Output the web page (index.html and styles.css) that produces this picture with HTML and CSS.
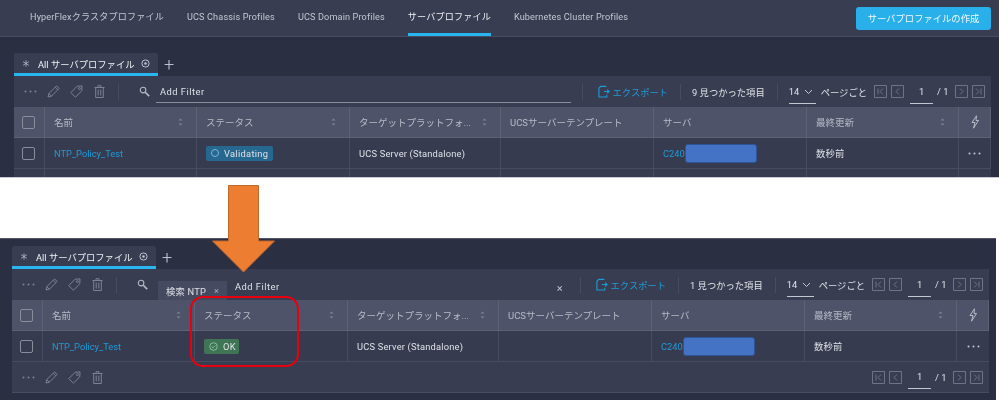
FILE: index.html
```html
<!DOCTYPE html>
<html>
<head>
  <title>サーバプロファイル</title>
  <link rel="stylesheet" href="styles.css">
</head>
<body>

<svg class="sprite" width="0" height="0">
  <symbol id="i-dots" viewBox="0 0 13 13"><circle cx="1.5" cy="6.5" r="1"/><circle cx="6.5" cy="6.5" r="1"/><circle cx="11.5" cy="6.5" r="1"/></symbol>
  <symbol id="i-pencil" viewBox="0 0 13 13"><path d="M1 12l.8-3.4L9.6.9l2.5 2.5-7.7 7.8zM1.8 8.6l2.6 2.6M8.3 2.2l2.5 2.5" fill="none" stroke="currentColor"/></symbol>
  <symbol id="i-tag" viewBox="0 0 13 13"><path d="M.8 7.6L7.2 1.2 12 .9l-.2 4.9-6.4 6.4zM9.3 2.6a1 1 0 1 0 1.1 1.1 1 1 0 0 0-1.1-1.1" fill="none" stroke="currentColor"/></symbol>
  <symbol id="i-trash" viewBox="0 0 13 13"><path d="M1.5 2.5h10M5 2.5V.7h3v1.8M2.7 2.5v10h7.6v-10M5.2 4.5v6M7.8 4.5v6" fill="none" stroke="currentColor"/></symbol>
  <symbol id="i-search" viewBox="0 0 13 13"><circle cx="4.8" cy="4.8" r="3.3" fill="none" stroke="currentColor" stroke-width="1.3"/><path d="M7.4 7.4l4.6 4.6" stroke="currentColor" stroke-width="2"/></symbol>
  <symbol id="i-export" viewBox="0 0 13 13"><path d="M9 1H3L1 3v9.500h8.500V10M6.500 6.500H12M10 4.500l2 2-2 2" fill="none" stroke="currentColor" stroke-width="1.200"/></symbol>
  <symbol id="i-first" viewBox="0 0 13 13"><path d="M.5.5h12v12H.5zM4 3.500v6M9 3.500L6 6.500l3 3" fill="none" stroke="currentColor"/></symbol>
  <symbol id="i-prev" viewBox="0 0 13 13"><path d="M.5.5h12v12H.5zM8 3.500L5 6.500l3 3" fill="none" stroke="currentColor"/></symbol>
  <symbol id="i-next" viewBox="0 0 13 13"><path d="M.5.5h12v12H.5zM5 3.500l3 3-3 3" fill="none" stroke="currentColor"/></symbol>
  <symbol id="i-last" viewBox="0 0 13 13"><path d="M.5.5h12v12H.5zM9 3.500v6M4 3.500l3 3-3 3" fill="none" stroke="currentColor"/></symbol>
  <symbol id="i-sort" viewBox="0 0 7 10"><path d="M3.500 1.500L5.500 3.500H1.500zM3.500 8.500L1.500 6.500h4z"/></symbol>
  <symbol id="i-bolt" viewBox="0 0 10 14"><path d="M6.500.8L2 7.500h3l-1.500 5.700L8.500 5.500H6z" fill="none" stroke="currentColor"/></symbol>
  <symbol id="i-star" viewBox="0 0 11 11"><path d="M5.500 1v9M1.500 3l8 5M9.500 3l-8 5" stroke="currentColor"/></symbol>
  <symbol id="i-gear" viewBox="0 0 9 9"><circle cx="4.500" cy="4.500" r="3.600" fill="none" stroke="currentColor"/><circle cx="4.500" cy="4.500" r="1.300"/></symbol>
  <symbol id="i-chev" viewBox="0 0 9 6"><path d="M1 1l3.500 3.500L8 1" fill="none" stroke="currentColor"/></symbol>
  <symbol id="i-check" viewBox="0 0 10 10"><circle cx="5" cy="5" r="4.200" fill="none" stroke="currentColor"/><path d="M3 5l1.500 1.500L7 3.800" fill="none" stroke="currentColor"/></symbol>
</svg>

<!-- Before -->
<div class="screen screen-top">
  <div class="nav">
    <a class="nav-item">HyperFlexクラスタプロファイル</a>
    <a class="nav-item">UCS Chassis Profiles</a>
    <a class="nav-item">UCS Domain Profiles</a>
    <a class="nav-item active">サーバプロファイル</a>
    <a class="nav-item">Kubernetes Cluster Profiles</a>
    <button class="create-btn">サーバプロファイルの作成</button>
  </div>

  <div class="content">
    <div class="tabs">
      <div class="tab">
        <svg class="icon-star"><use href="#i-star"/></svg>
        <span>All サーバプロファイル</span>
        <svg class="icon-9"><use href="#i-gear"/></svg>
      </div>
      <span class="tab-add">+</span>
    </div>

    <div class="toolbar">
      <svg class="tool"><use href="#i-dots"/></svg>
      <svg class="tool"><use href="#i-pencil"/></svg>
      <svg class="tool"><use href="#i-tag"/></svg>
      <svg class="tool"><use href="#i-trash"/></svg>
      <span class="sep"></span>
      <svg class="tool search-icon"><use href="#i-search"/></svg>
      <div class="filter underlined"><span class="filter-add">Add Filter</span></div>
      <span class="sep"></span>
      <a class="export"><svg class="tool"><use href="#i-export"/></svg>エクスポート</a>
      <span class="sep"></span>
      <span class="found">9 見つかった項目</span>
      <span class="sep"></span>
      <span class="per-page">14 <svg class="chev"><use href="#i-chev"/></svg></span>
      <span class="per-label">ページごと</span>
      <div class="pager">
        <svg class="tool"><use href="#i-first"/></svg>
        <svg class="tool"><use href="#i-prev"/></svg>
        <span class="page-num">1</span>
        <span class="page-total">/ 1</span>
        <svg class="tool"><use href="#i-next"/></svg>
        <svg class="tool"><use href="#i-last"/></svg>
      </div>
    </div>

    <div class="table">
      <div class="th"><span class="checkbox"></span></div>
      <div class="th">名前<svg class="sort"><use href="#i-sort"/></svg></div>
      <div class="th">ステータス<svg class="sort"><use href="#i-sort"/></svg></div>
      <div class="th">ターゲットプラットフォ...<svg class="sort"><use href="#i-sort"/></svg></div>
      <div class="th">UCSサーバーテンプレート</div>
      <div class="th">サーバ</div>
      <div class="th">最終更新<svg class="sort"><use href="#i-sort"/></svg></div>
      <div class="th th-bolt"><svg class="bolt"><use href="#i-bolt"/></svg></div>

      <div class="td"><span class="checkbox"></span></div>
      <div class="td"><a class="link">NTP_Policy_Test</a></div>
      <div class="td"><span class="badge badge-blue"><span class="ring"></span>Validating</span></div>
      <div class="td">UCS Server (Standalone)</div>
      <div class="td"></div>
      <div class="td"><a class="link">C240</a><span class="redacted"></span></div>
      <div class="td">数秒前</div>
      <div class="td td-more"><svg class="tool"><use href="#i-dots"/></svg></div>

      <div class="td"></div>
      <div class="td"></div>
      <div class="td"><span class="badge badge-gray"></span></div>
      <div class="td"></div>
      <div class="td"></div>
      <div class="td"></div>
      <div class="td"></div>
      <div class="td"></div>
    </div>
  </div>
</div>

<div class="gap"></div>

<!-- After -->
<div class="screen screen-bottom">
  <div class="content">
    <div class="tabs">
      <div class="tab">
        <svg class="icon-star"><use href="#i-star"/></svg>
        <span>All サーバプロファイル</span>
        <svg class="icon-9"><use href="#i-gear"/></svg>
      </div>
      <span class="tab-add">+</span>
    </div>

    <div class="toolbar">
      <svg class="tool"><use href="#i-dots"/></svg>
      <svg class="tool"><use href="#i-pencil"/></svg>
      <svg class="tool"><use href="#i-tag"/></svg>
      <svg class="tool"><use href="#i-trash"/></svg>
      <span class="sep"></span>
      <svg class="tool search-icon"><use href="#i-search"/></svg>
      <div class="filter">
        <span class="chip">検索 NTP<span class="chip-x">×</span></span>
        <span class="filter-add low">Add Filter</span>
        <span class="filter-x">×</span>
      </div>
      <span class="sep"></span>
      <a class="export"><svg class="tool"><use href="#i-export"/></svg>エクスポート</a>
      <span class="sep"></span>
      <span class="found">1 見つかった項目</span>
      <span class="sep"></span>
      <span class="per-page">14 <svg class="chev"><use href="#i-chev"/></svg></span>
      <span class="per-label">ページごと</span>
      <div class="pager">
        <svg class="tool"><use href="#i-first"/></svg>
        <svg class="tool"><use href="#i-prev"/></svg>
        <span class="page-num">1</span>
        <span class="page-total">/ 1</span>
        <svg class="tool"><use href="#i-next"/></svg>
        <svg class="tool"><use href="#i-last"/></svg>
      </div>
    </div>

    <div class="table">
      <div class="th"><span class="checkbox"></span></div>
      <div class="th">名前<svg class="sort"><use href="#i-sort"/></svg></div>
      <div class="th">ステータス<svg class="sort"><use href="#i-sort"/></svg></div>
      <div class="th">ターゲットプラットフォ...<svg class="sort"><use href="#i-sort"/></svg></div>
      <div class="th">UCSサーバーテンプレート</div>
      <div class="th">サーバ</div>
      <div class="th">最終更新<svg class="sort"><use href="#i-sort"/></svg></div>
      <div class="th th-bolt"><svg class="bolt"><use href="#i-bolt"/></svg></div>

      <div class="td"><span class="checkbox"></span></div>
      <div class="td"><a class="link">NTP_Policy_Test</a></div>
      <div class="td"><span class="badge badge-green"><svg class="icon-9"><use href="#i-check"/></svg>OK</span></div>
      <div class="td">UCS Server (Standalone)</div>
      <div class="td"></div>
      <div class="td"><a class="link">C240</a><span class="redacted"></span></div>
      <div class="td">数秒前</div>
      <div class="td td-more"><svg class="tool"><use href="#i-dots"/></svg></div>
    </div>

    <div class="footer">
      <svg class="tool"><use href="#i-dots"/></svg>
      <svg class="tool"><use href="#i-pencil"/></svg>
      <svg class="tool"><use href="#i-tag"/></svg>
      <svg class="tool"><use href="#i-trash"/></svg>
      <div class="pager">
        <svg class="tool"><use href="#i-first"/></svg>
        <svg class="tool"><use href="#i-prev"/></svg>
        <span class="page-num">1</span>
        <span class="page-total">/ 1</span>
        <svg class="tool"><use href="#i-next"/></svg>
        <svg class="tool"><use href="#i-last"/></svg>
      </div>
    </div>
  </div>
</div>

<!-- Annotations drawn on top of the screenshots -->
<svg class="arrow" width="64" height="88" viewBox="0 0 64 88">
  <path d="M16.500 .5h30v55.500h16l-31 31-31-31h16z"/>
</svg>
<div class="highlight"></div>

</body>
</html>
```

FILE: styles.css
```css
body {
  margin: 0;
  background-color: #FFF;
  font-family: Roboto, "Noto Sans CJK JP", sans-serif;
  font-size: 9.3px;
  color: #DFE1E6;
  position: relative;
  width: 999px;
  height: 400px;
  overflow: hidden;
}
.sprite {
  position: absolute;
}
svg {
  fill: currentColor;
  flex: none;
}
.screen {
  background-color: #2B2F42;
  overflow: hidden;
  filter: blur(0.35px);
}
.screen-top {
  height: 178px;
  border-bottom: 1px solid #C9CAD0;
  box-sizing: border-box;
}
.gap {
  height: 60px;
}
.screen-bottom {
  width: 996px;
  height: 162px;
  border-top: 1px solid #50556A;
  box-sizing: border-box;
}

/* top nav */
.nav {
  height: 37px;
  box-sizing: border-box;
  background-color: #383D52;
  border-bottom: 1px solid #474C60;
  display: flex;
  align-items: center;
  padding-left: 30px;
  padding-right: 8px;
  gap: 23px;
}
.nav-item {
  height: 36px;
  line-height: 35px;
  box-sizing: border-box;
  color: #C4C7D0;
  font-size: 9.1px;
  letter-spacing: 0.15px;
}
.nav-item.active {
  color: #F0F1F4;
  border-bottom: 3px solid #29B6F0;
}
.create-btn {
  margin-left: auto;
  width: 135px;
  height: 23px;
  border: none;
  border-radius: 3px;
  background-color: #29B0EA;
  color: #F2FAFE;
  font-family: inherit;
  font-size: 9.3px;
  padding: 0;
}

.content {
  padding: 16px 8px 0 14px;
}
.screen-bottom .content {
  padding: 7px 7px 0 12px;
}

/* tabs */
.tabs {
  display: flex;
  align-items: center;
  height: 23px;
}
.tab {
  width: 144px;
  height: 23px;
  box-sizing: border-box;
  padding: 1px 8px 0;
  display: flex;
  align-items: center;
  background-color: #383D52;
  border-bottom: 3px solid #29B6F0;
  border-radius: 2px 2px 0 0;
  color: #F0F1F4;
  white-space: nowrap;
}
.tab span {
  margin-left: 8px;
}
.tab .icon-9 {
  margin-left: auto;
}
.icon-star {
  width: 8px;
  height: 9px;
  color: #BFC2CC;
}
.icon-9 {
  width: 9px;
  height: 9px;
  color: #BFC2CC;
}
.tab-add {
  margin-left: 6px;
  font-size: 18px;
  font-weight: 300;
  color: #BFC2CC;
}

/* toolbar */
.toolbar {
  height: 31px;
  background-color: #383D52;
  display: flex;
  align-items: center;
  padding-left: 10px;
  color: #DFE1E6;
}
.tool {
  width: 13px;
  height: 13px;
  margin-right: 10px;
  color: #7D8293;
}
.sep {
  width: 1px;
  height: 16px;
  background-color: #474C60;
  flex: none;
}
.toolbar > .sep:first-of-type {
  margin: 0 20px 0 2px;
}
.search-icon {
  width: 11px;
  height: 11px;
  color: #B5B8C3;
  margin-right: 6px;
}
.filter {
  flex: 1;
  height: 22px;
  display: flex;
  align-items: center;
  margin: 0 11px 0 0;
  padding-left: 4px;
  box-sizing: border-box;
}
.filter.underlined {
  border-bottom: 1px solid #8A8E9C;
}
.filter-add {
  letter-spacing: 0.5px;
}
.filter-add.low {
  margin-top: 3px;
}
.chip {
  height: 19px;
  margin: 12px 8px 0 0;
  width: 69px;
  box-sizing: border-box;
  padding-left: 8px;
  background-color: #454A60;
  display: flex;
  align-items: center;
  white-space: nowrap;
  letter-spacing: 0.2px;
  position: relative;
  z-index: 1;
}
.chip-x {
  margin-left: 8px;
  color: #A8ACB8;
}
.filter-x {
  margin-left: auto;
  margin-right: 6px;
  margin-top: 7px;
  color: #C4C7D0;
  font-size: 11px;
}
.export {
  display: flex;
  align-items: center;
  margin: 0 12px 0 15px;
  color: #1F9BD7;
  white-space: nowrap;
}
.export .tool {
  color: #1F9BD7;
  width: 12px;
  margin-right: 3px;
}
.found {
  margin: 0 12px 0 11px;
  white-space: nowrap;
}
.per-page {
  margin-left: 11px;
  width: 27px;
  height: 24px;
  line-height: 23px;
  border-bottom: 1px solid #C4C7D0;
  white-space: nowrap;
  box-sizing: border-box;
  flex: none;
}
.chev {
  width: 9px;
  height: 6px;
  margin-left: 3px;
  color: #C4C7D0;
}
.per-label {
  margin: 0 7px 0 5px;
  white-space: nowrap;
}
.pager {
  display: flex;
  align-items: center;
  width: 115px;
  flex: none;
  margin-left: auto;
  margin-right: 2px;
}
.pager .tool {
  margin-right: 4px;
  color: #6E7385;
}
.page-num {
  width: 23px;
  height: 24px;
  line-height: 24px;
  margin-left: 2px;
  text-align: center;
  border-bottom: 1px solid #C4C7D0;
  box-sizing: border-box;
  flex: none;
}
.page-total {
  width: 18px;
  margin-left: 4px;
  white-space: nowrap;
  flex: none;
}

/* table */
.table {
  display: grid;
  grid-template-columns: 31px 152px 153px 151px 153px 153px 152px 32px;
  grid-auto-rows: 31px;
}
.th, .td {
  display: flex;
  align-items: center;
  box-sizing: border-box;
  padding-left: 9px;
  border-right: 1px solid #474C60;
  border-bottom: 1px solid #474C60;
  white-space: nowrap;
}
.th {
  background-color: #4E5369;
  color: #B8BBC6;
  border-color: #5C6176;
  font-size: 9.5px;
}
.td {
  background-color: #363B50;
  letter-spacing: 0.2px;
}
.th:last-child, .td:last-child {
  border-right: none;
}
.th-bolt, .td-more {
  justify-content: center;
  padding: 0;
}
.td-more .tool {
  margin: 0;
  color: #C4C7D0;
}
.sort {
  width: 7px;
  height: 10px;
  margin-left: auto;
  margin-right: 12px;
  color: #7D8293;
}
.bolt {
  width: 10px;
  height: 14px;
  color: #B8BBC6;
}
.checkbox {
  width: 11px;
  height: 11px;
  border: 1px solid #8A8E9C;
  border-radius: 2px;
  display: block;
  margin-left: -1px;
}
.link {
  color: #1F9BD7;
  letter-spacing: 0;
}
.badge {
  height: 15px;
  display: inline-flex;
  align-items: center;
  padding: 0 5px;
  border-radius: 2px;
  letter-spacing: 0.3px;
}
.badge-blue {
  width: 67px;
  box-sizing: border-box;
  background-color: #26688F;
}
.badge-green {
  width: 35px;
  box-sizing: border-box;
  background-color: #3F7455;
}
.badge-green .icon-9 {
  color: #8FC7A3;
  margin-right: 5px;
}
.badge-gray {
  width: 79px;
  background-color: #6B7080;
  box-sizing: border-box;
  margin-top: 18px;
}
.ring {
  width: 8px;
  height: 8px;
  box-sizing: border-box;
  border: 1.5px solid #7FB5D5;
  border-radius: 50%;
  margin-right: 5px;
  flex: none;
}
.redacted {
  width: 72px;
  height: 19px;
  box-sizing: border-box;
  background-color: #4472C4;
  border: 1px solid #2F5597;
  border-radius: 3px;
}

/* bottom toolbar */
.footer {
  height: 31px;
  background-color: #383D52;
  display: flex;
  align-items: center;
  padding-left: 10px;
  border-bottom: 1px solid #474C60;
  box-sizing: border-box;
}

/* annotations */
.arrow {
  position: absolute;
  left: 212px;
  top: 185px;
  fill: #ED7D31;
  stroke: #C0692C;
}
.highlight {
  position: absolute;
  left: 190px;
  top: 296px;
  width: 109px;
  height: 71px;
  box-sizing: border-box;
  border: 2px solid #E8000F;
  border-radius: 13px;
}
```
